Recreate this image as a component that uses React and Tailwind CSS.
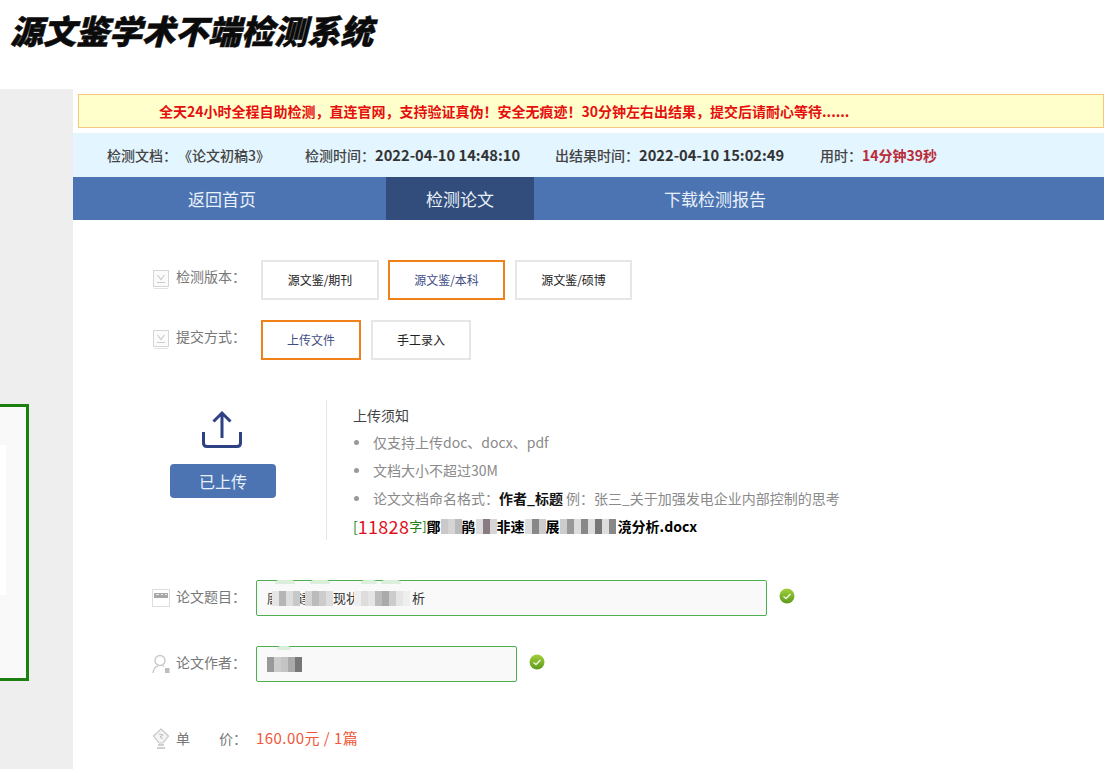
const blue = "bg-[#4c74b2]";

// mosaic that stands for blurred-out text
const Mosaic = ({ cells, className = "" }) => {
  return (
    <span className={`inline-flex h-[15px] align-middle blur-[0.7px] ${className}`}>
      {cells.map((c, i) => (
        <span key={i} className="w-[7px] h-full" style={{ backgroundColor: c }} />
      ))}
    </span>
  );
};

const BoxIcon = () => (
  <svg width="18" height="20" viewBox="0 0 18 20" className="shrink-0">
    <rect x="1.5" y="0.5" width="15" height="16" fill="#fbfbfb" stroke="#d6d6d6" />
    <path d="M5.5 5 L9 9.5 L12.5 5" fill="none" stroke="#cbcbcb" strokeWidth="1.2" />
    <path d="M5 12.5 H13" stroke="#cbcbcb" />
    <path d="M2 18.5 H16" stroke="#e2e2e2" />
  </svg>
);

const TitleIcon = () => (
  <svg width="18" height="18" viewBox="0 0 18 18" className="shrink-0">
    <rect x="0.5" y="0.5" width="17" height="17" fill="none" stroke="#bbb" strokeDasharray="1 1" />
    <rect x="2" y="4" width="14" height="5" fill="#a8a8a8" />
    <path d="M4 5.5 H7 M9 5.5 H11 M13 5.5 H15" stroke="#eee" />
  </svg>
);

const UserIcon = () => (
  <svg width="18" height="20" viewBox="0 0 18 20" className="shrink-0">
    <circle cx="8" cy="6.5" r="5" fill="none" stroke="#c9c9c9" strokeWidth="1.4" />
    <path d="M1 19 C1.5 14.5 4 12.5 6 11.8 M10.5 11.5 L12 12.5" fill="none" stroke="#c9c9c9" strokeWidth="1.4" />
    <rect x="13" y="14" width="4.5" height="5" fill="#bdbdbd" />
  </svg>
);

const PriceIcon = () => (
  <svg width="18" height="22" viewBox="0 0 18 22" className="shrink-0">
    <path d="M9 1 L16.5 8 L11 15 H7 L1.5 8 Z" fill="#f4f4f4" stroke="#c6c6c6" strokeWidth="1.2" />
    <path d="M7 6 L11 7 L8 9 L11 11" fill="none" stroke="#bdbdbd" />
    <path d="M6 17 H12 M5 20 H13" stroke="#cfcfcf" strokeWidth="2" />
  </svg>
);

const CheckDot = ({ id }) => (
  <svg width="16" height="16" viewBox="0 0 16 16" className="shrink-0 ml-3 mb-[4px]">
    <defs>
      <linearGradient id={id} x1="0" y1="0" x2="0" y2="1">
        <stop offset="0" stopColor="#a3cf3c" />
        <stop offset="1" stopColor="#5d9a1c" />
      </linearGradient>
    </defs>
    <circle cx="8" cy="8" r="7.5" fill={`url(#${id})`} />
    <path d="M4.5 8.5 L7 10.5 L11.5 6" fill="none" stroke="#e8f5d8" strokeWidth="1.6" />
  </svg>
);

const Option = ({ label, active, className }) => (
  <div
    className={`h-10 flex items-center justify-center border-2 text-[12px] ${className} ${
      active ? "border-[#f08019] text-[#3f4d87]" : "border-[#e6e6e6] text-[#222]"
    }`}
  >
    {label}
  </div>
);

const FieldLabel = ({ icon, children, textClass }) => (
  <div className="w-[104px] pl-[79px] flex items-center gap-[6px] text-[14px] text-[#777] whitespace-nowrap box-content">
    {icon}
    <span className={textClass}>{children}</span>
  </div>
);

const Note = ({ children }) => (
  <li className="h-7 flex items-center text-[14px] text-[#8a8a8a] whitespace-nowrap">
    <span className="w-[5px] h-[5px] rounded-full bg-[#999] ml-[1px] mr-[14px]" />
    {children}
  </li>
);

const Smudge = ({ className }) => (
  <span className={`absolute -top-[1px] h-[4px] rounded-t-full bg-[#dcefdc] blur-[0.5px] ${className}`} />
);

export default function App() {
  return (
    <div className="w-[1104px] h-[769px] overflow-hidden bg-white font-['Noto_Sans_CJK_SC','Liberation_Sans',sans-serif]">
      <div className="h-[89px] pl-[10px] pt-[10px]">
        <h1 className="text-[33px] leading-[40px] font-black italic text-[#0b0b0b] [-webkit-text-stroke:0.5px_#0b0b0b]">
          源文鉴学术不端检测系统
        </h1>
      </div>

      <div className="flex h-[680px]">
        <aside className="relative w-[73px] shrink-0 bg-[#eeeeee]">
          <div className="absolute left-0 top-[315px] w-[29px] h-[277px] border-y-[3px] border-r-[3px] border-[#1b7f12] bg-[#faf9f9]">
            <div className="mt-[38px] w-[6px] h-[150px] bg-white" />
          </div>
        </aside>

        <main className="flex-1 min-w-0">
          <div className="mt-[5px] ml-[5px] h-[34px] pl-[80px] flex items-center bg-[#ffffcc] border border-[#f5c77e] text-[14px] font-bold text-[#e60f0f] whitespace-nowrap">
            全天24小时全程自助检测，直连官网，支持验证真伪！安全无痕迹！30分钟左右出结果，提交后请耐心等待......
          </div>

          <div className="mt-[5px] h-[44px] pl-[34px] flex items-center bg-[#e3f5ff] text-[14px] font-medium text-[#444] whitespace-nowrap">
            <span className="w-[198px]">检测文档：<span className="ml-[8px]">《论文初稿3》</span></span>
            <span className="w-[250px]">
              检测时间：<span className="text-[14.7px] font-bold text-[#333]">2022-04-10 14:48:10</span>
            </span>
            <span className="w-[265px]">
              出结果时间：<span className="text-[14.7px] font-bold text-[#333]">2022-04-10 15:02:49</span>
            </span>
            <span>
              用时：<span className="font-bold text-[#b92c38]">14分钟39秒</span>
            </span>
          </div>

          <nav className={`h-[43px] flex items-center text-[17px] text-[#e8f0fa] ${blue}`}>
            <div className="w-[313px] pl-[115px]">返回首页</div>
            <div className="w-[148px] h-full flex items-center justify-center bg-[#324d7b]">检测论文</div>
            <div className="pl-[130px]">下载检测报告</div>
          </nav>

          <div className="mt-[40px] h-10 flex items-center">
            <FieldLabel icon={<BoxIcon />} textClass="mb-[8px]">检测版本：</FieldLabel>
            <div className="flex ml-[5px]">
              <Option label="源文鉴/期刊" className="w-[118px]" />
              <Option label="源文鉴/本科" active className="w-[117px] ml-[9px]" />
              <Option label="源文鉴/硕博" className="w-[117px] ml-[10px]" />
            </div>
          </div>

          <div className="mt-5 h-10 flex items-center">
            <FieldLabel icon={<BoxIcon />} textClass="mb-[8px]">提交方式：</FieldLabel>
            <div className="flex gap-[10px] ml-[5px]">
              <Option label="上传文件" active className="w-[100px]" />
              <Option label="手工录入" className="w-[100px]" />
            </div>
          </div>

          <div className="mt-[40px] h-[140px] flex">
            <div className="w-[253px] pl-[97px] pt-[10px]">
              <div className="w-[106px] flex flex-col items-center">
                <svg width="42" height="40" viewBox="0 0 42 40" className="-ml-[3px]">
                  <path
                    d="M21 28 V3 M12.5 11.5 L21 3 L29.5 11.5 M2.5 22 V33 Q2.5 36.5 6 36.5 H36 Q39.5 36.5 39.5 33 V22"
                    fill="none"
                    stroke="#2f4185"
                    strokeWidth="3"
                  />
                </svg>
                <div className={`mt-[14px] w-[106px] h-[34px] rounded-[4px] flex items-center justify-center text-[16px] text-[#e8f0fa] ${blue}`}>
                  已上传
                </div>
              </div>
            </div>
            <div className="pl-[26px] border-l border-[#e5e5e5]">
              <div className="h-[28px] pt-[3px] text-[14px] leading-[24px] text-[#444]">上传须知</div>
              <ul>
                <Note>仅支持上传doc、docx、pdf</Note>
                <Note>文档大小不超过30M</Note>
                <Note>
                  论文文档命名格式：<b className="text-[#111] font-bold">作者_标题</b>
                  <span className="ml-[3px] text-[14px]">例：张三_关于加强发电企业内部控制的思考</span>
                </Note>
              </ul>
              <div className="h-7 flex items-center text-[14px] font-bold text-black whitespace-nowrap">
                <span className="font-normal text-[#1b7f12]">[</span>
                <span className="font-normal text-[18px] tracking-[0.3px] text-[#e0101c]">11828</span>
                <span className="font-normal text-[13px] text-[#1b7f12]">字]</span>
                <span>鄮</span>
                <Mosaic cells={["#c9c9c9", "#d5d5d5", "#bbb"]} />
                <span>鹃</span>
                <Mosaic cells={["#ddd", "#8a7a82", "#d5d5d5"]} />
                <span>非速</span>
                <Mosaic cells={["#ddd", "#888", "#ccc"]} />
                <span>展</span>
                <Mosaic cells={["#ccc", "#999", "#ddd", "#888", "#ddd", "#777", "#ddd", "#888"]} />
                <span className="ml-[2px]">滰分析.docx</span>
              </div>
            </div>
          </div>

          <div className="mt-10 h-9 flex items-center">
            <FieldLabel icon={<TitleIcon />} textClass="mb-[4px]">论文题目：</FieldLabel>
            <div className="relative w-[511px] h-9 pl-[10px] flex items-center rounded-[2px] border border-[#4caf50] bg-[#f9f9f9] text-[13px] text-[#333]">
              <Smudge className="left-[18px] w-[20px]" />
              <Smudge className="left-[53px] w-[20px]" />
              <Smudge className="left-[104px] w-[16px]" />
              <Smudge className="left-[124px] w-[20px]" />
              <span>廍</span>
              <Mosaic cells={["#e5e5e5", "#b5b5b5", "#ddd", "#c8c8c8"]} className="-ml-[8px]" />
              <span className="-ml-[2px]">達</span>
              <Mosaic cells={["#d5d5d5", "#bbb", "#ccc", "#ddd"]} className="-ml-[6px]" />
              <span>现状</span>
              <Mosaic cells={["#eee", "#ddd", "#e5e5e5", "#bbb", "#aaa", "#ccc", "#e5e5e5", "#eee"]} className="-ml-[5px]" />
              <span className="ml-[2px]">析</span>
            </div>
            <CheckDot id="dot1" />
          </div>

          <div className="mt-[30px] h-9 flex items-center">
            <FieldLabel icon={<UserIcon />} textClass="mb-[4px]">论文作者：</FieldLabel>
            <div className="relative w-[261px] h-9 pl-[10px] flex items-center rounded-[2px] border border-[#4caf50] bg-[#f9f9f9] text-[13px] text-[#333]">
              <Smudge className="left-[20px] w-[14px]" />
              <Mosaic cells={["#999", "#ccc", "#c4c4c4", "#aaa", "#777"]} />
            </div>
            <CheckDot id="dot2" />
          </div>

          <div className="mt-[45px] h-6 flex items-center">
            <FieldLabel icon={<PriceIcon />} textClass="mb-[2px]">
              <span className="inline-block w-[43px]">单</span>价：
            </FieldLabel>
            <span className="mb-[2px] text-[15px] tracking-[0.45px] text-[#f0583a] whitespace-nowrap">160.00元 / 1篇</span>
          </div>
        </main>
      </div>
    </div>
  );
}
